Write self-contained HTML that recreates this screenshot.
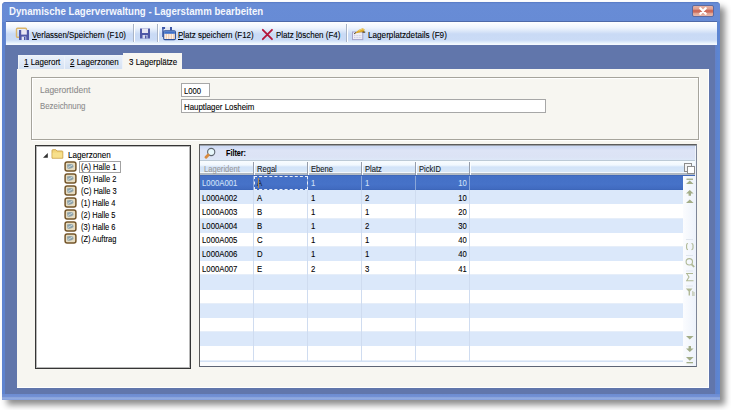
<!DOCTYPE html>
<html><head><meta charset="utf-8">
<style>
*{box-sizing:border-box;margin:0;padding:0}
html,body{width:731px;height:410px;overflow:hidden;background:#fff;font-family:"Liberation Sans",sans-serif;}
.a{position:absolute}
.t{position:absolute;white-space:nowrap;font-size:9.6px;line-height:11px;color:#000;transform-origin:0 0;-webkit-text-stroke:0.1px}
#win{left:2px;top:2px;width:718px;height:398px;background:#6176ab;border-radius:4px 4px 0 0;box-shadow:5px 5px 6px rgba(0,0,0,.45)}
#title{left:2px;top:2px;width:718px;height:20px;background:linear-gradient(#5576c0 0,#6286d0 1px,#688cd6 2px,#678bd5 100%);border-radius:4px 4px 0 0}
#tb{left:6px;top:21px;width:711px;height:24px;background:linear-gradient(#4f6aa8 0,#4f6aa8 1px,#fff 1px,#eef4fd 7px,#c9daf5 13px,#cadbf6 19px,#e6f2fc 22px,#f4f9fe 23px,#f4f9fe 24px)}
#lb{left:2px;top:22px;width:3px;height:377px;background:#5e83cf}
#rb{left:715px;top:21px;width:5px;height:378px;background:linear-gradient(90deg,#6680c4,#5b84d0 40%,#5f86d2)}
#bb{left:2px;top:394px;width:718px;height:6px;background:linear-gradient(#6c8cd2 0,#7290d4 2.5px,#8aa4dc 3.5px,#94ace0 5px,#7c98d8 6px)}
#panel{left:17px;top:69px;width:692px;height:319px;background:#f7f6f1;border-bottom:1px solid #fff;border-right:1px solid #fff}
.tab{position:absolute;top:55px;height:14px;background:linear-gradient(#e9f0fa,#d6e2f3);border:1px solid #eef3fa;border-bottom:none}
u{text-decoration-thickness:1px;text-underline-offset:1px}
.sep{position:absolute;top:24px;width:2px;height:18px;background:linear-gradient(90deg,#a9b4c6 0,#a9b4c6 1px,#fff 1px)}
#grp{left:31px;top:77px;width:668px;height:63px;border:1px solid #a6a49c;box-shadow:inset 1px 1px 0 #fff,1px 1px 0 #fff}
.in{position:absolute;background:#fff;border:1px solid #a7a7a7}
#tree{left:35px;top:145px;width:156px;height:224px;background:#fff;border:1px solid #353535;box-shadow:inset 0 0 0 1px #b8b8b8}
#grid{left:199px;top:144px;width:498px;height:223px;background:#eef3fb;border:1px solid #5c5c5c;border-right-color:#7d8597;border-bottom-color:#5d6474;box-shadow:inset 1px 1px 0 #9aa0aa}
</style></head><body>
<div id="win" class="a"></div>
<div id="title" class="a"></div>
<div id="lb" class="a"></div>
<div id="rb" class="a"></div>
<div id="bb" class="a"></div>
<div class="a" style="left:5px;top:21px;width:1px;height:24px;background:#6487d2"></div>
<div class="t" style="left:8.5px;top:6px;font-weight:bold;color:#f4f7fd;font-size:10px;transform:scaleX(.965);-webkit-text-stroke:0">Dynamische Lagerverwaltung - Lagerstamm bearbeiten</div>
<!-- close button -->
<div class="a" style="left:692px;top:5px;width:22px;height:12px;background:linear-gradient(#e6b0a2 0,#dfa090 30%,#cc6a5a 45%,#cc6a5a 60%,#e0a494 75%,#e8b8aa 100%);border:1px solid #5b6aa0;border-radius:2px"></div>
<svg class="a" style="left:697px;top:5px" width="12" height="12" viewBox="0 0 12 12"><path d="M3.3 3.3 L8.7 8.7 M8.7 3.3 L3.3 8.7" stroke="#fff" stroke-width="2.3" stroke-linecap="round"/></svg>
<div id="tb" class="a"></div>
<div id="panel" class="a"></div>
<!-- toolbar items -->
<svg class="a" style="left:15px;top:27px" width="16" height="14" viewBox="0 0 16 14">
 <rect x="1.5" y="1.3" width="10" height="9" rx="1" fill="none" stroke="#dbb66c" stroke-width="1.4"/>
 <path d="M4 3 H14 V13 H4 Z" fill="#5058a8"/>
 <rect x="6.2" y="3" width="5.6" height="4.6" fill="#e8e6f4"/>
 <rect x="6.6" y="9.6" width="4.6" height="3.4" fill="#dfe4f5"/>
 <rect x="9" y="10" width="1.5" height="3" fill="#4a56aa"/>
</svg>
<div class="t" style="left:32px;top:29px;transform:scaleX(.827)"><u>V</u>erlassen/Speichern (F10)</div>
<div class="sep" style="left:133px"></div>
<svg class="a" style="left:139px;top:28px" width="12" height="11" viewBox="0 0 12 11">
 <path d="M1 0.5 H11 V10.5 H1 Z" fill="#4e58a6"/>
 <rect x="3" y="0.5" width="6" height="4.5" fill="#e6e6f2"/>
 <rect x="3.5" y="7" width="5" height="3.5" fill="#d5daf0"/>
 <rect x="6" y="7.5" width="1.5" height="3" fill="#4e58a6"/>
</svg>
<div class="sep" style="left:157px"></div>
<svg class="a" style="left:161px;top:26px" width="17" height="16" viewBox="0 0 17 16">
 <rect x="1.2" y="1" width="1.4" height="10" fill="#3d58a8"/>
 <rect x="1.2" y="1" width="3" height="2" fill="#3d58a8"/>
 <rect x="9" y="1" width="2" height="3.5" fill="#3d58a8"/>
 <rect x="4.2" y="1.3" width="4.8" height="3" fill="#e4e8f2"/>
 <rect x="2.7" y="4.8" width="11.7" height="8.8" rx="1.2" fill="#fbf1ea" stroke="#2c4f98" stroke-width="1.1"/>
 <rect x="3.2" y="5.2" width="10.7" height="2.6" fill="#3f70c8"/>
 <path d="M5.3 8 V13 M7.8 8 V13 M10.3 8 V13 M12.8 8 V13" stroke="#f0c8a8" stroke-width="1"/>
</svg>
<div class="t" style="left:178px;top:29px;transform:scaleX(.83)"><u>P</u>latz speichern (F12)</div>
<svg class="a" style="left:261px;top:28px" width="13" height="13" viewBox="0 0 13 13">
 <path d="M1.8 1.8 L11 11.2 M11 1.8 L1.8 11.2" stroke="#b4143a" stroke-width="1.8" stroke-linecap="round"/>
</svg>
<div class="t" style="left:276px;top:29px;transform:scaleX(.833)">Platz <u>l</u>öschen (F4)</div>
<div class="sep" style="left:346px"></div>
<svg class="a" style="left:351px;top:27px" width="15" height="14" viewBox="0 0 15 14">
 <rect x="1.5" y="5" width="10.3" height="7.6" fill="#efedf7" stroke="#a3a3cb" stroke-width="1"/>
 <path d="M3 8.6 H10.3 M3 10.6 H10.3" stroke="#c3c6de" stroke-width="0.9" stroke-dasharray="1 0.6"/>
 <path d="M3.6 6.4 L7.5 3 L11.6 1.2 L13.6 2.2 L13 5 L9.5 5.2 L6.4 6 Z" fill="#dcaa2e"/>
 <path d="M7.5 3.6 L11.5 2 L12.8 2.8" stroke="#f3d77a" stroke-width="0.9" fill="none"/>
 <path d="M3.2 6.8 L4.8 5.6" stroke="#3a2a10" stroke-width="1"/>
 <path d="M11.5 5.1 L14.2 5.1" stroke="#3a2a10" stroke-width="1.1"/>
</svg>
<div class="t" style="left:368px;top:29px;transform:scaleX(.85)">Lagerplatzdetails (F9)</div>

<!-- tabs -->
<div class="tab" style="left:18px;width:47px"></div>
<div class="tab" style="left:64px;width:59px"></div>
<div class="a" style="left:123px;top:53px;width:59px;height:16px;background:#f7f6f1"></div>
<div class="t" style="left:24px;top:56px;transform:scaleX(.83)"><u>1</u> Lagerort</div>
<div class="t" style="left:70px;top:56px;transform:scaleX(.83)"><u>2</u> Lagerzonen</div>
<div class="t" style="left:129px;top:56px;transform:scaleX(.83)">3 Lagerplätze</div>

<div id="grp" class="a"></div>
<div class="t" style="left:40px;top:84px;color:#8c8c8c;transform:scaleX(.88)">LagerortIdent</div>
<div class="t" style="left:40px;top:100px;color:#8c8c8c;transform:scaleX(.82)">Bezeichnung</div>
<div class="in" style="left:181px;top:83px;width:29px;height:14px"></div>
<div class="in" style="left:181px;top:99px;width:365px;height:14px"></div>
<div class="t" style="left:184px;top:84.5px;transform:scaleX(.8)">L000</div>
<div class="t" style="left:184px;top:100.5px;transform:scaleX(.82)">Hauptlager Losheim</div>

<div id="tree" class="a"></div>
<svg class="a" style="left:42px;top:152px" width="7" height="7" viewBox="0 0 7 7"><path d="M5.8 1 V5.8 H1 Z" fill="#303030"/></svg>
<svg class="a" style="left:51px;top:149px" width="13" height="10" viewBox="0 0 13 10"><path d="M1 1.5 Q1 0.7 1.8 0.7 H4.8 L6 2 H11 Q11.8 2 11.8 2.8 V9.2 H1 Z" fill="#f3d57a" stroke="#c9a24a" stroke-width="0.9"/><rect x="1.6" y="3.6" width="9.6" height="5" fill="#f7e08c"/></svg>
<div class="t" style="left:68px;top:149px;transform:scaleX(.845)">Lagerzonen</div>
<svg class="a" style="left:64px;top:161px" width="13" height="11" viewBox="0 0 13 11"><rect x="1.1" y="1.1" width="10.8" height="8.8" rx="2" fill="#e6dcc2" stroke="#74552a" stroke-width="1.5"/><path d="M3 3.5 Q6 2.5 9 3.5 L9.5 6 Q7 8.5 3.5 7.5 Z" fill="#8da2aa"/><path d="M4 6.5 L8.5 4" stroke="#d8e4e8" stroke-width="0.8"/></svg>
<div class="t" style="left:81px;top:161px;transform:scaleX(.78)">(A) Halle 1</div>
<svg class="a" style="left:64px;top:173px" width="13" height="11" viewBox="0 0 13 11"><rect x="1.1" y="1.1" width="10.8" height="8.8" rx="2" fill="#e6dcc2" stroke="#74552a" stroke-width="1.5"/><path d="M3 3.5 Q6 2.5 9 3.5 L9.5 6 Q7 8.5 3.5 7.5 Z" fill="#8da2aa"/><path d="M4 6.5 L8.5 4" stroke="#d8e4e8" stroke-width="0.8"/></svg>
<div class="t" style="left:81px;top:173px;transform:scaleX(.78)">(B) Halle 2</div>
<svg class="a" style="left:64px;top:185px" width="13" height="11" viewBox="0 0 13 11"><rect x="1.1" y="1.1" width="10.8" height="8.8" rx="2" fill="#e6dcc2" stroke="#74552a" stroke-width="1.5"/><path d="M3 3.5 Q6 2.5 9 3.5 L9.5 6 Q7 8.5 3.5 7.5 Z" fill="#8da2aa"/><path d="M4 6.5 L8.5 4" stroke="#d8e4e8" stroke-width="0.8"/></svg>
<div class="t" style="left:81px;top:185px;transform:scaleX(.78)">(C) Halle 3</div>
<svg class="a" style="left:64px;top:197px" width="13" height="11" viewBox="0 0 13 11"><rect x="1.1" y="1.1" width="10.8" height="8.8" rx="2" fill="#e6dcc2" stroke="#74552a" stroke-width="1.5"/><path d="M3 3.5 Q6 2.5 9 3.5 L9.5 6 Q7 8.5 3.5 7.5 Z" fill="#8da2aa"/><path d="M4 6.5 L8.5 4" stroke="#d8e4e8" stroke-width="0.8"/></svg>
<div class="t" style="left:81px;top:197px;transform:scaleX(.78)">(1) Halle 4</div>
<svg class="a" style="left:64px;top:209px" width="13" height="11" viewBox="0 0 13 11"><rect x="1.1" y="1.1" width="10.8" height="8.8" rx="2" fill="#e6dcc2" stroke="#74552a" stroke-width="1.5"/><path d="M3 3.5 Q6 2.5 9 3.5 L9.5 6 Q7 8.5 3.5 7.5 Z" fill="#8da2aa"/><path d="M4 6.5 L8.5 4" stroke="#d8e4e8" stroke-width="0.8"/></svg>
<div class="t" style="left:81px;top:209px;transform:scaleX(.78)">(2) Halle 5</div>
<svg class="a" style="left:64px;top:221px" width="13" height="11" viewBox="0 0 13 11"><rect x="1.1" y="1.1" width="10.8" height="8.8" rx="2" fill="#e6dcc2" stroke="#74552a" stroke-width="1.5"/><path d="M3 3.5 Q6 2.5 9 3.5 L9.5 6 Q7 8.5 3.5 7.5 Z" fill="#8da2aa"/><path d="M4 6.5 L8.5 4" stroke="#d8e4e8" stroke-width="0.8"/></svg>
<div class="t" style="left:81px;top:221px;transform:scaleX(.78)">(3) Halle 6</div>
<svg class="a" style="left:64px;top:233px" width="13" height="11" viewBox="0 0 13 11"><rect x="1.1" y="1.1" width="10.8" height="8.8" rx="2" fill="#e6dcc2" stroke="#74552a" stroke-width="1.5"/><path d="M3 3.5 Q6 2.5 9 3.5 L9.5 6 Q7 8.5 3.5 7.5 Z" fill="#8da2aa"/><path d="M4 6.5 L8.5 4" stroke="#d8e4e8" stroke-width="0.8"/></svg>
<div class="t" style="left:81px;top:233px;transform:scaleX(.78)">(Z) Auftrag</div>
<div class="a" style="left:79px;top:161px;width:42px;height:12px;border:1px solid #a2a2a2"></div>
<div id="grid" class="a"></div>
<div class="a" style="left:200px;top:146px;width:495px;height:15px;background:linear-gradient(#cbd8f4 0,#d3ddf5 2px,#dde4f6 4px,#dce3f5 11px,#dde8f8 100%);border-bottom:1px solid #bccad6"></div>
<svg class="a" style="left:203px;top:147px" width="13" height="12" viewBox="0 0 13 12">
 <circle cx="8.2" cy="5" r="3.6" fill="#e8f8fc" stroke="#5e6670" stroke-width="1.1"/>
 <path d="M3 10.3 L5.2 8" stroke="#d88a40" stroke-width="2.8" stroke-linecap="round"/>
</svg>
<div class="t" style="left:226px;top:147px;font-weight:bold;transform:scaleX(.75)">Filter:</div>
<div class="a" style="left:200px;top:161px;width:495px;height:15px;background:linear-gradient(#f8fcff 0,#f2f8fe 4px,#d2e3f8 6px,#d6e6f8 10.5px,#f4f8fc 11.5px,#b0b8c0 12.5px,#b4bcc6 14px,#3f68ba 14px)"></div>
<div class="a" style="left:253px;top:162px;width:2px;height:13px;background:linear-gradient(90deg,#959dab 50%,#fbfdff 50%)"></div>
<div class="a" style="left:307px;top:162px;width:2px;height:13px;background:linear-gradient(90deg,#959dab 50%,#fbfdff 50%)"></div>
<div class="a" style="left:361px;top:162px;width:2px;height:13px;background:linear-gradient(90deg,#959dab 50%,#fbfdff 50%)"></div>
<div class="a" style="left:415px;top:162px;width:2px;height:13px;background:linear-gradient(90deg,#959dab 50%,#fbfdff 50%)"></div>
<div class="a" style="left:469px;top:162px;width:2px;height:13px;background:linear-gradient(90deg,#959dab 50%,#fbfdff 50%)"></div>
<div class="t" style="left:204px;top:163px;color:#9a9a9a;transform:scaleX(.79)">Lagerident</div>
<div class="t" style="left:257px;top:163px;color:#1a1a1a;transform:scaleX(.79)">Regal</div>
<div class="t" style="left:311px;top:163px;color:#1a1a1a;transform:scaleX(.79)">Ebene</div>
<div class="t" style="left:365px;top:163px;color:#1a1a1a;transform:scaleX(.79)">Platz</div>
<div class="t" style="left:419px;top:163px;color:#1a1a1a;transform:scaleX(.79)">PickID</div>
<svg class="a" style="left:684px;top:163px" width="11" height="11" viewBox="0 0 11 11">
 <rect x="0.5" y="0.5" width="7" height="8" fill="#f4f4f4" stroke="#8c8c8c"/>
 <rect x="3.5" y="3.5" width="7" height="7" fill="#fff" stroke="#8c8c8c"/>
</svg>
<div class="a" style="left:200px;top:176px;width:483px;height:14px;background:linear-gradient(#4470c6 0,#4672c8 60%,#416bc0 92%,#3a63b6 100%)"></div>
<div class="a" style="left:200px;top:190.20px;width:483px;height:14.20px;background:#dbe8fa"></div>
<div class="a" style="left:200px;top:204.40px;width:483px;height:14.20px;background:#ffffff;border-bottom:1px solid #e6eef9"></div>
<div class="a" style="left:200px;top:218.60px;width:483px;height:14.20px;background:#dbe8fa"></div>
<div class="a" style="left:200px;top:232.80px;width:483px;height:14.20px;background:#ffffff;border-bottom:1px solid #e6eef9"></div>
<div class="a" style="left:200px;top:247.00px;width:483px;height:14.20px;background:#dbe8fa"></div>
<div class="a" style="left:200px;top:261.20px;width:483px;height:14.20px;background:#ffffff;border-bottom:1px solid #e6eef9"></div>
<div class="a" style="left:200px;top:275.40px;width:483px;height:14.20px;background:#dbe8fa"></div>
<div class="a" style="left:200px;top:289.60px;width:483px;height:14.20px;background:#ffffff;border-bottom:1px solid #e6eef9"></div>
<div class="a" style="left:200px;top:303.80px;width:483px;height:14.20px;background:#dbe8fa"></div>
<div class="a" style="left:200px;top:318.00px;width:483px;height:14.20px;background:#ffffff;border-bottom:1px solid #e6eef9"></div>
<div class="a" style="left:200px;top:332.20px;width:483px;height:14.20px;background:#dbe8fa"></div>
<div class="a" style="left:200px;top:346.40px;width:483px;height:14.20px;background:#ffffff;border-bottom:1px solid #e6eef9"></div>
<div class="a" style="left:200px;top:360.6px;width:483px;height:1px;background:#d3e1f5"></div>
<div class="a" style="left:200px;top:361.6px;width:495px;height:4.4px;background:#fbfcfe"></div>
<div class="a" style="left:253px;top:190px;width:1px;height:171px;background:#cfdcf0"></div>
<div class="a" style="left:307px;top:190px;width:1px;height:171px;background:#cfdcf0"></div>
<div class="a" style="left:361px;top:190px;width:1px;height:171px;background:#cfdcf0"></div>
<div class="a" style="left:415px;top:190px;width:1px;height:171px;background:#cfdcf0"></div>
<div class="a" style="left:469px;top:190px;width:1px;height:171px;background:#cfdcf0"></div>
<div class="a" style="left:253px;top:176px;width:1px;height:14px;background:#8aa6d8"></div>
<div class="a" style="left:307px;top:176px;width:1px;height:14px;background:#8aa6d8"></div>
<div class="a" style="left:361px;top:176px;width:1px;height:14px;background:#8aa6d8"></div>
<div class="a" style="left:415px;top:176px;width:1px;height:14px;background:#8aa6d8"></div>
<div class="a" style="left:469px;top:176px;width:1px;height:14px;background:#8aa6d8"></div>
<div class="a" style="left:254px;top:176px;width:54px;height:14px;border:1px dashed #e8eef9"></div>
<div class="t" style="left:202px;top:177px;color:#d0e0f8;transform:scaleX(.81)">L000A001</div>
<div class="t" style="left:257px;top:177px;color:#1e2a40;transform:scaleX(.81)">A</div>
<div class="t" style="left:311px;top:177px;color:#d0e0f8;transform:scaleX(.81)">1</div>
<div class="t" style="left:365px;top:177px;color:#d0e0f8;transform:scaleX(.81)">1</div>
<div class="t" style="left:415px;width:52px;text-align:right;top:177px;color:#d0e0f8"><span style="display:inline-block;transform:scaleX(.8);transform-origin:100% 0">10</span></div>
<div class="t" style="left:202px;top:192px;color:#000;transform:scaleX(.81)">L000A002</div>
<div class="t" style="left:257px;top:192px;color:#000;transform:scaleX(.81)">A</div>
<div class="t" style="left:311px;top:192px;color:#000;transform:scaleX(.81)">1</div>
<div class="t" style="left:365px;top:192px;color:#000;transform:scaleX(.81)">2</div>
<div class="t" style="left:415px;width:52px;text-align:right;top:192px;color:#000"><span style="display:inline-block;transform:scaleX(.8);transform-origin:100% 0">10</span></div>
<div class="t" style="left:202px;top:206px;color:#000;transform:scaleX(.81)">L000A003</div>
<div class="t" style="left:257px;top:206px;color:#000;transform:scaleX(.81)">B</div>
<div class="t" style="left:311px;top:206px;color:#000;transform:scaleX(.81)">1</div>
<div class="t" style="left:365px;top:206px;color:#000;transform:scaleX(.81)">1</div>
<div class="t" style="left:415px;width:52px;text-align:right;top:206px;color:#000"><span style="display:inline-block;transform:scaleX(.8);transform-origin:100% 0">20</span></div>
<div class="t" style="left:202px;top:220px;color:#000;transform:scaleX(.81)">L000A004</div>
<div class="t" style="left:257px;top:220px;color:#000;transform:scaleX(.81)">B</div>
<div class="t" style="left:311px;top:220px;color:#000;transform:scaleX(.81)">1</div>
<div class="t" style="left:365px;top:220px;color:#000;transform:scaleX(.81)">2</div>
<div class="t" style="left:415px;width:52px;text-align:right;top:220px;color:#000"><span style="display:inline-block;transform:scaleX(.8);transform-origin:100% 0">30</span></div>
<div class="t" style="left:202px;top:234px;color:#000;transform:scaleX(.81)">L000A005</div>
<div class="t" style="left:257px;top:234px;color:#000;transform:scaleX(.81)">C</div>
<div class="t" style="left:311px;top:234px;color:#000;transform:scaleX(.81)">1</div>
<div class="t" style="left:365px;top:234px;color:#000;transform:scaleX(.81)">1</div>
<div class="t" style="left:415px;width:52px;text-align:right;top:234px;color:#000"><span style="display:inline-block;transform:scaleX(.8);transform-origin:100% 0">40</span></div>
<div class="t" style="left:202px;top:248px;color:#000;transform:scaleX(.81)">L000A006</div>
<div class="t" style="left:257px;top:248px;color:#000;transform:scaleX(.81)">D</div>
<div class="t" style="left:311px;top:248px;color:#000;transform:scaleX(.81)">1</div>
<div class="t" style="left:365px;top:248px;color:#000;transform:scaleX(.81)">1</div>
<div class="t" style="left:415px;width:52px;text-align:right;top:248px;color:#000"><span style="display:inline-block;transform:scaleX(.8);transform-origin:100% 0">40</span></div>
<div class="t" style="left:202px;top:263px;color:#000;transform:scaleX(.81)">L000A007</div>
<div class="t" style="left:257px;top:263px;color:#000;transform:scaleX(.81)">E</div>
<div class="t" style="left:311px;top:263px;color:#000;transform:scaleX(.81)">2</div>
<div class="t" style="left:365px;top:263px;color:#000;transform:scaleX(.81)">3</div>
<div class="t" style="left:415px;width:52px;text-align:right;top:263px;color:#000"><span style="display:inline-block;transform:scaleX(.8);transform-origin:100% 0">41</span></div>
<div class="a" style="left:257.5px;top:178px;width:1.5px;height:10px;background:#b08850"></div>
<div class="a" style="left:683px;top:176px;width:12px;height:190px;background:linear-gradient(90deg,#fbfcfe,#eef3fb)"></div>
<svg class="a" style="left:683px;top:176px" width="13" height="190" viewBox="0 0 13 190">
 <g fill="#a3ad88">
  <rect x="3.5" y="2.6" width="6.5" height="1.3"/>
  <path d="M3 8 L6.8 4.6 L10.6 8 Z"/>
  <path d="M3 17.5 L6.8 14 L10.6 17.5 H8 V19.8 H5.6 V17.5 Z"/>
  <path d="M3 27 L6.8 23.5 L10.6 27 Z"/>
 </g>
 <g fill="none" stroke="#b0b996" stroke-width="1.1">
  <path d="M5 67.5 Q3.6 67.5 3.6 69 V72 Q3.6 73.6 5 73.6 M8.5 67.5 Q10 67.5 10 69 V72 Q10 73.6 8.5 73.6"/>
  <circle cx="6.3" cy="85.8" r="3.2"/>
  <path d="M8.6 88.3 L11.2 91" stroke-width="1.8"/>
  <path d="M3 97.5 H10 M3 104.8 H10.5 M4 98 L6 101 L4 104.2"/>
  <path d="M2.8 112.5 H9.5 L7 115.5 V119.5 H5.6 V115.5 Z" fill="#b2ba98" stroke="none"/><path d="M9.8 115 V120 M11 116 V120" stroke="#b8c0a0" stroke-width="0.9"/>
 </g>
 <g stroke="#dfe5ee" stroke-width="1"><path d="M3 63.5 H10 M3 79.5 H10 M3 95 H10 M3 110 H10"/></g>
 <g fill="#a3ad88">
  <path d="M3 160 L6.8 163.5 L10.6 160 Z"/>
  <path d="M3 172.5 L6.8 176 L10.6 172.5 H8 V170 H5.6 V172.5 Z"/>
  <path d="M3 181 L6.8 184.8 L10.6 181 Z"/>
  <rect x="3.5" y="186" width="6.5" height="1.3"/>
 </g>
</svg>
</body></html>
